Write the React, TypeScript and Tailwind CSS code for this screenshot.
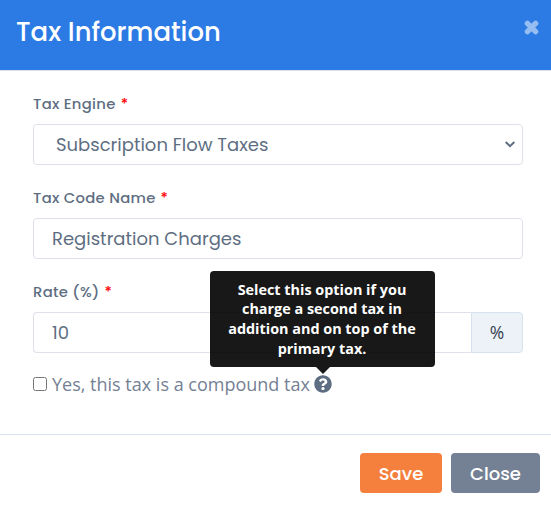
import type { ReactNode } from 'react';
import { FaQuestionCircle } from 'react-icons/fa';

interface FieldProps {
  label: string;
  children: ReactNode;
}

function Field({ label, children }: FieldProps) {
  return (
    <div className="h-[94px]">
      <label className="flex h-5 items-center gap-[5px] pt-px text-[14.8px] font-medium tracking-[0.3px] text-[#5e6e82]">
        <span>{label}</span>
        <span className="text-[#ff0000]">*</span>
      </label>
      <div className="mt-[10px] flex h-[41px] text-[18px] text-[#5e6e82]">{children}</div>
    </div>
  );
}

function CloseIcon() {
  return (
    <svg viewBox="0 0 15 15" className="size-[15px]" fill="none" stroke="currentColor" strokeWidth="5.4" strokeLinecap="round">
      <path d="M3.4 3.4 11.6 11.6M11.6 3.4 3.4 11.6" />
    </svg>
  );
}

function Tooltip() {
  return (
    <div className="absolute bottom-[19px] -left-[104px] flex w-[225px] flex-col items-center opacity-90">
      <div className="flex h-24 w-full flex-col items-center justify-center rounded bg-black pr-px text-center font-['Open_Sans',sans-serif] text-[14.4px] leading-[19.6px] font-bold whitespace-nowrap text-white">
        <span>Select this option if you</span>
        <span>charge a second tax in</span>
        <span>addition and on top of the</span>
        <span>primary tax.</span>
      </div>
      <div className="border-x-[7px] border-t-[7px] border-x-transparent border-t-black" />
    </div>
  );
}

export default function App() {
  return (
    <div className="h-[511px] w-[551px] overflow-hidden bg-white font-[Poppins,Inter,sans-serif]">
      <header className="flex h-[71px] items-start justify-between border-b border-[#d8e2ef] bg-[#2c7be5] pl-4 pr-3">
        <h1 className="mt-[14px] text-[25.9px] leading-9 font-medium text-white">Tax Information</h1>
        <button className="mt-[19.5px] text-[#95bdf2]" aria-label="Close">
          <CloseIcon />
        </button>
      </header>

      <main className="h-[363px] pl-[33px] pr-7 pt-[23px]">
        <Field label="Tax Engine">
          <div className="flex w-full items-center justify-between rounded border border-[#e0e0eb] pl-[22px] pr-[7px]">
            <span>Subscription Flow Taxes</span>
            <svg viewBox="0 0 10 7" className="h-[7px] w-[10px]" fill="none" stroke="currentColor" strokeWidth="2">
              <path d="M.7 1 5 5.2 9.3 1" />
            </svg>
          </div>
        </Field>
        <Field label="Tax Code Name">
          <div className="flex w-full items-center rounded border border-[#e0e0eb] pl-[18px]">
            <span>Registration Charges</span>
          </div>
        </Field>
        <Field label="Rate (%)">
          <div className="flex flex-1 items-center rounded-l border border-r-0 border-[#e0e0eb] pl-[18px]">
            <span>10</span>
          </div>
          <div className="flex w-[52px] items-center justify-center rounded-r border border-[#d8e2ef] bg-[#edf2f9] font-['Open_Sans',sans-serif] text-[17.5px] text-[#344050]">
            %
          </div>
        </Field>
        <div className="-mt-[6px] flex h-7 items-center font-['Open_Sans',sans-serif] text-[18px] text-[#748194]">
          <span className="mr-[5px] size-[14px] rounded-[2.5px] border border-[#767676] bg-white" />
          <span className="w-[262px] whitespace-nowrap">Yes, this tax is a compound tax</span>
          <span className="relative size-[18px]">
            <FaQuestionCircle className="size-[18px] text-[#5e6e82]" />
            <Tooltip />
          </span>
        </div>
      </main>

      <footer className="flex h-[77px] justify-end gap-[9px] border-t border-[#d8e2ef] pr-[11px] pt-[18px] text-[18px] font-medium text-white">
        <button className="h-10 w-[82px] rounded bg-[#f5803e]">Save</button>
        <button className="h-10 w-[89px] rounded bg-[#748194]">Close</button>
      </footer>
    </div>
  );
}
